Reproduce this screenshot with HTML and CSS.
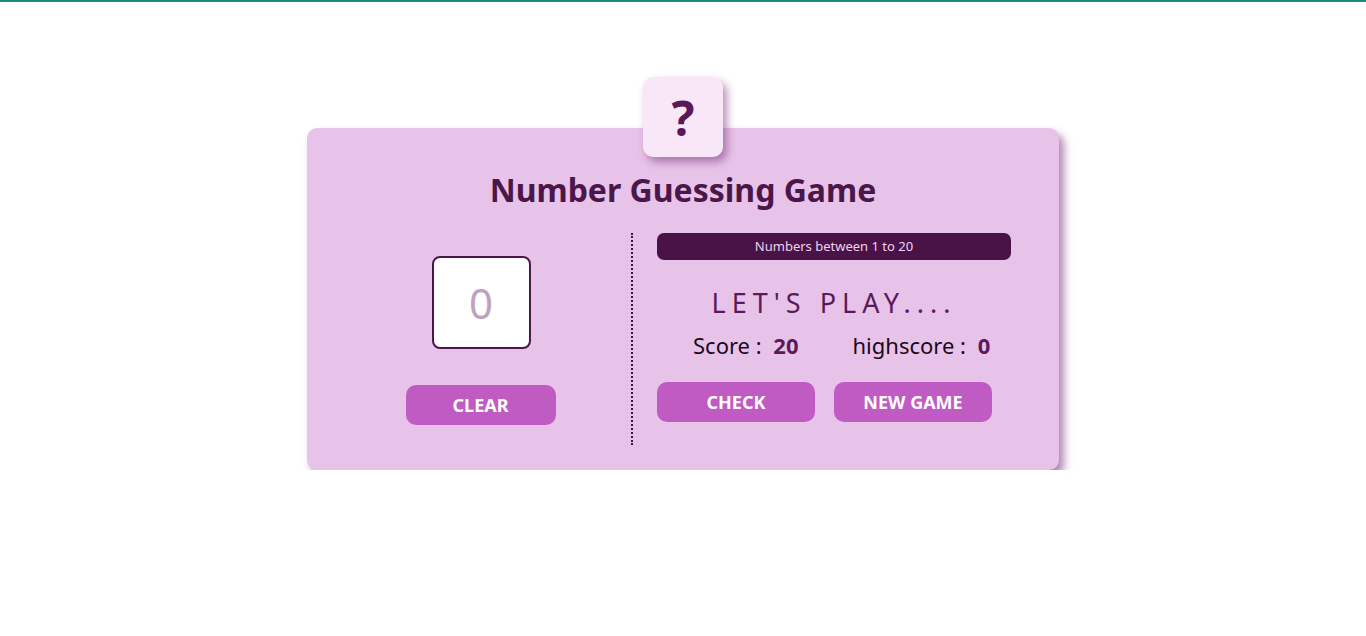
FILE: index.html
```html
<!DOCTYPE html>
<html lang="en">
<head>
  <meta charset="UTF-8" />
  <meta name="viewport" content="width=device-width, initial-scale=1.0" />
  <title>Number Guessing Game</title>
  <link rel="stylesheet" href="styles.css">
</head>
<body>
  <div class="page">
    <div class="card">
      <div class="secret">?</div>
      <h1>Number Guessing Game</h1>
      <div class="board">
        <div class="left">
          <input class="guess" type="text" placeholder="0" />
          <button class="btn clear">CLEAR</button>
        </div>
        <div class="right">
          <div class="range">Numbers between 1 to 20</div>
          <p class="message">LET'S PLAY....</p>
          <div class="scores">
            <span>Score : <b>20</b></span>
            <span>highscore : <b>0</b></span>
          </div>
          <div class="actions">
            <button class="btn check">CHECK</button>
            <button class="btn again">NEW GAME</button>
          </div>
        </div>
      </div>
    </div>
  </div>
</body>
</html>
```

FILE: styles.css
```css
* {
  box-sizing: border-box;
}
body {
  font-family: 'Noto Sans', 'Open Sans', sans-serif;
  margin: 0;
  background: #fff;
  border-top: 2px solid #1f8a78;
}
.page {
  display: flex;
  justify-content: center;
  padding-top: 126px;
}
.card {
  position: relative;
  width: 752px;
  height: 342px;
  background: #e8c3e9;
  border-radius: 10px;
  box-shadow: 5px 6px 8px rgba(110, 40, 110, 0.55);
  padding: 0 24px;
}
.secret {
  position: absolute;
  top: -51px;
  left: 336px;
  width: 80px;
  height: 80px;
  background: #f7e7f7;
  border-radius: 10px;
  box-shadow: 4px 5px 8px rgba(110, 40, 110, 0.5);
  display: flex;
  align-items: center;
  justify-content: center;
  font-size: 48px;
  font-weight: 700;
  color: #5a1858;
}
h1 {
  margin: 0;
  padding-top: 40px;
  height: 105px;
  text-align: center;
  font-size: 32px;
  font-weight: 700;
  color: #4b1649;
}
.board {
  display: flex;
}
.left {
  width: 302px;
  height: 212px;
  border-right: 2px dotted #3d1040;
  display: flex;
  flex-direction: column;
  align-items: center;
  padding-top: 23px;
}
.guess {
  width: 99px;
  height: 93px;
  border: 2px solid #4b1649;
  border-radius: 8px;
  background: #fff;
  font-family: inherit;
  font-size: 42px;
  text-align: center;
  color: #4b1649;
  outline: none;
  padding: 0;
}
.guess::placeholder {
  color: #c0a0c0;
}
.btn {
  border: none;
  border-radius: 10px;
  background: #c05bc3;
  color: #fff;
  font-family: inherit;
  font-size: 18px;
  font-weight: 700;
  height: 40px;
  cursor: pointer;
}
.clear {
  width: 150px;
  margin-top: 36px;
  margin-left: -1px;
}
.right {
  width: 378px;
  padding-left: 24px;
}
.range {
  width: 354px;
  height: 27px;
  background: #4a1347;
  color: #f0d2f0;
  border-radius: 7px;
  font-size: 13px;
  text-align: center;
  line-height: 27px;
}
.message {
  margin: 22px 0 0;
  width: 354px;
  text-align: center;
  font-size: 27px;
  letter-spacing: 6px;
  color: #5a1a5a;
  line-height: 42px;
}
.scores {
  display: flex;
  gap: 54px;
  padding-left: 36px;
  margin-top: 1px;
  font-size: 22px;
  color: #1a0a1a;
  line-height: 40px;
}
.scores b {
  color: #5a1a5a;
  margin-left: 6px;
}
.actions {
  display: flex;
  gap: 19px;
  margin-top: 17px;
}
.check,
.again {
  width: 158px;
}
```
